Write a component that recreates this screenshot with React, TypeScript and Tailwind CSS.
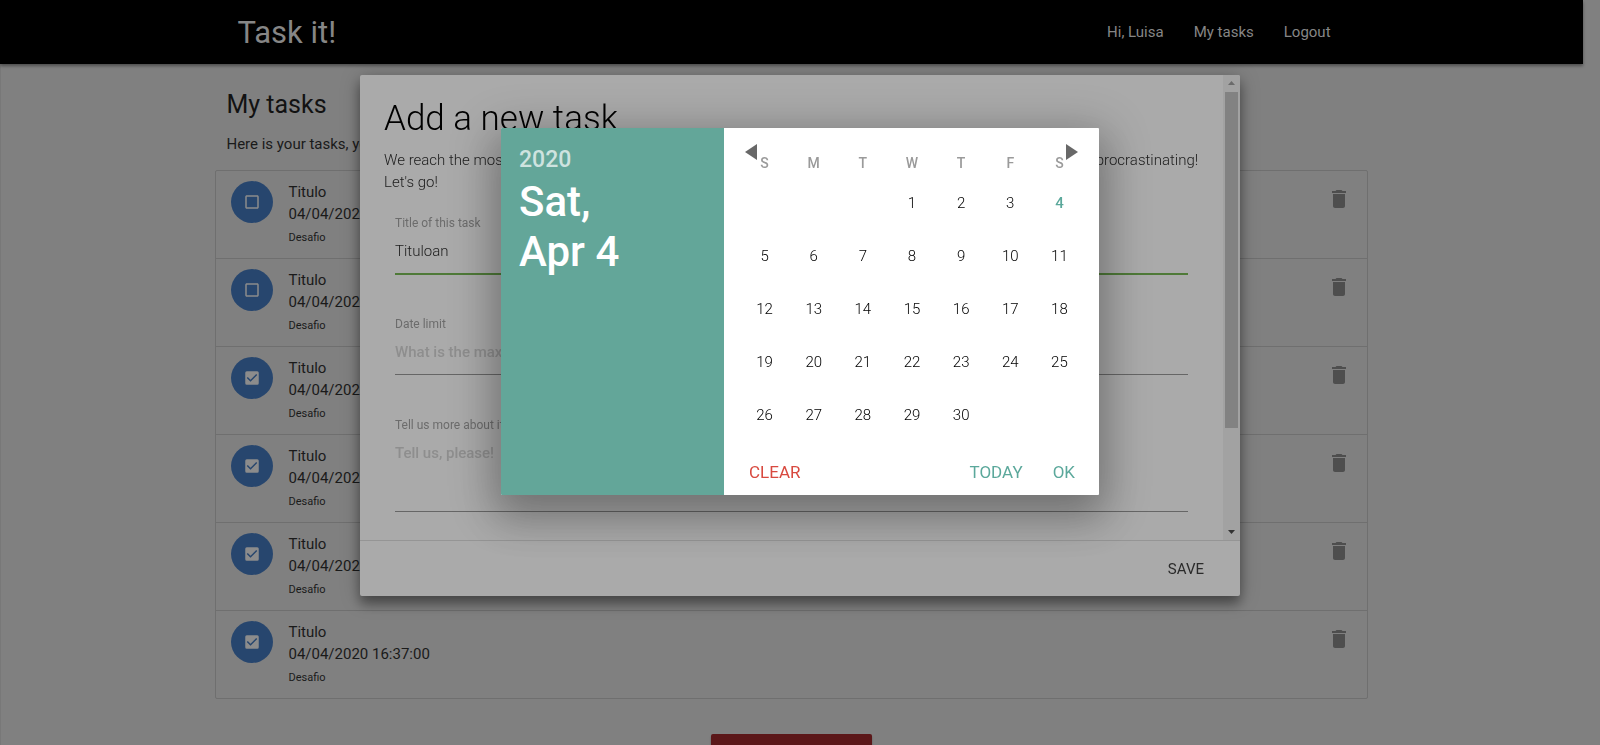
import React from "react";
import { MdCheckBox, MdCheckBoxOutlineBlank, MdDelete } from "react-icons/md";

const tasks = [false, false, true, true, true, true].map((done, id) => ({
  id,
  done,
  title: "Titulo",
  date: "04/04/2020 16:37:00",
  tag: "Desafio",
}));

const weekdays = ["S", "M", "T", "W", "T", "F", "S"];

const weeks: (number | null)[][] = [
  [null, null, null, 1, 2, 3, 4],
  [5, 6, 7, 8, 9, 10, 11],
  [12, 13, 14, 15, 16, 17, 18],
  [19, 20, 21, 22, 23, 24, 25],
  [26, 27, 28, 29, 30, null, null],
];

function NavBar() {
  return (
    <nav className="relative h-16 bg-black text-[#868686] shadow-[0_2px_3px_rgba(0,0,0,0.4)]">
      <div className="mx-auto flex h-full w-[70%] items-center justify-between">
        <a href="#home" className="text-[31px] leading-none">
          Task it!
        </a>
        <ul className="flex text-[15px] font-normal">
          {["Hi, Luisa", "My tasks", "Logout"].map((label) => (
            <li key={label}>
              <a href="#nav" className="block px-[15px] leading-[64px]">
                {label}
              </a>
            </li>
          ))}
        </ul>
      </div>
    </nav>
  );
}

function TaskList() {
  return (
    <ul className="mt-[15px] -mx-[11px] rounded-[2px] border border-[#6f6f6f]">
      {tasks.map((task) => (
        <li
          key={task.id}
          className="flex h-[88px] items-start gap-[15px] border-b border-[#6f6f6f] pt-[10px] pr-4 pl-[15px] last:h-[87px] last:border-b-0"
        >
          <button
            type="button"
            aria-label={task.done ? "Mark as pending" : "Mark as done"}
            className="flex size-[42px] shrink-0 items-center justify-center rounded-full bg-[#27466e] text-[18px] text-[#8c8c8c]"
          >
            {task.done ? <MdCheckBox /> : <MdCheckBoxOutlineBlank />}
          </button>
          <div className="grow text-[15px] leading-[22px] font-normal text-[#1a1a1a]">
            <p>{task.title}</p>
            <p>{task.date}</p>
            <p className="mt-[2px] text-[11px]">{task.tag}</p>
          </div>
          <button type="button" aria-label="Delete task" className="mt-[6px] text-[24px] text-[#4e4e4e]">
            <MdDelete />
          </button>
        </li>
      ))}
    </ul>
  );
}

function ScrollBar() {
  return (
    <div aria-hidden="true" className="flex w-[17px] shrink-0 flex-col items-center bg-[#a2a2a2]">
      <div className="flex h-[17px] items-center">
        <svg width="7" height="4" viewBox="0 0 7 4">
          <path d="M0 4h7L3.5 0z" fill="#6b6b6b" />
        </svg>
      </div>
      <div className="flex w-[13px] grow flex-col">
        <div className="h-[78%] bg-[#828282]" />
      </div>
      <div className="flex h-[17px] items-center">
        <svg width="7" height="4" viewBox="0 0 7 4">
          <path d="M0 0h7L3.5 4z" fill="#333" />
        </svg>
      </div>
    </div>
  );
}

function TaskModal() {
  return (
    <div
      role="dialog"
      aria-label="Add a new task"
      className="fixed inset-x-0 top-[10%] mx-auto flex h-[70%] w-[55%] flex-col overflow-hidden rounded-[2px] bg-[#aaaaaa] text-[#1c1c1c] shadow-[0_8px_12px_rgba(0,0,0,0.35),0_3px_20px_rgba(0,0,0,0.25)]"
    >
      <div className="flex min-h-0 grow">
        <div className="grow overflow-hidden p-6">
          <h2 className="text-[35px] leading-10 text-black">Add a new task</h2>
          <p className="mt-[10px] text-[15px] leading-[22px]">
            We reach the most important part of all: create here the tasks that you need to finish properly today and
            stop procrastinating! Let&apos;s go!
          </p>
          <form className="px-[11px] pt-[22px]">
            <div className="h-[101px]">
              <label htmlFor="title" className="block text-[12px] leading-4 font-normal text-[#6c6c6c]">
                Title of this task
              </label>
              <input
                id="title"
                type="text"
                defaultValue="Tituloan"
                className="block h-11 w-full border-b-2 border-[#4f7a38] bg-transparent pb-[2px] text-[15px] outline-none"
              />
            </div>
            <div className="h-[101px]">
              <label htmlFor="date" className="block text-[12px] leading-4 font-normal text-[#6c6c6c]">
                Date limit
              </label>
              <input
                id="date"
                type="text"
                placeholder="What is the maximum date?"
                className="block h-[43px] w-full border-b border-[#666666] bg-transparent pb-[2px] text-[15px] outline-none placeholder:font-medium placeholder:text-[#8e8e8e]"
              />
            </div>
            <div>
              <label htmlFor="details" className="block text-[12px] leading-4 font-normal text-[#6c6c6c]">
                Tell us more about it
              </label>
              <textarea
                id="details"
                placeholder="Tell us, please!"
                className="block h-[79px] w-full resize-none border-b border-[#666666] bg-transparent pt-[9px] text-[15px] leading-[22px] outline-none placeholder:font-medium placeholder:text-[#8e8e8e]"
              />
            </div>
          </form>
        </div>
        <ScrollBar />
      </div>
      <div className="flex h-[56px] shrink-0 items-center justify-end border-t border-[#959595] px-5 pt-[2px]">
        <button type="button" className="h-9 px-4 text-[15px] font-normal text-[#2b2b2b]">
          SAVE
        </button>
      </div>
    </div>
  );
}

function DatePicker() {
  return (
    <div
      role="dialog"
      aria-label="Date limit"
      className="fixed inset-x-0 top-32 mx-auto flex w-[598px] overflow-hidden rounded-[1px] bg-white shadow-[0_24px_38px_3px_rgba(0,0,0,0.14),0_9px_46px_8px_rgba(0,0,0,0.24)]"
    >
      <div className="w-[223px] shrink-0 bg-[#63a699] px-[18px] pt-[19px] font-medium text-white">
        <div className="text-[23px] leading-[25px] text-white/70">2020</div>
        <div className="mt-[5px] text-[42px] leading-[50px]">
          Sat,
          <br />
          Apr 4
        </div>
      </div>
      <div className="grow pt-4 pr-[15px] pl-4">
        <div className="flex h-4 justify-between pr-[6px] pl-[5px]">
          <button type="button" aria-label="Previous month">
            <svg width="12" height="16" viewBox="0 0 12 16">
              <path d="M12 0v16L0 8z" fill="#686868" />
            </svg>
          </button>
          <button type="button" aria-label="Next month">
            <svg width="12" height="16" viewBox="0 0 12 16">
              <path d="M0 0v16l12-8z" fill="#686868" />
            </svg>
          </button>
        </div>
        <table className="-mt-2 w-full table-fixed text-center text-[15px] text-black">
          <thead>
            <tr className="text-[14px] text-[#9a9a9a]">
              {weekdays.map((day, i) => (
                <th key={i} scope="col" className="h-[25px] p-0 pb-[2px] font-medium">
                  {day}
                </th>
              ))}
            </tr>
          </thead>
          <tbody>
            {weeks.map((week, w) => (
              <tr key={w}>
                {week.map((day, d) => (
                  <td key={d} className="h-[53px] p-0 align-middle">
                    {day && (
                      <button type="button" className={day === 4 ? "font-medium text-[#5ba89b]" : ""}>
                        {day}
                      </button>
                    )}
                  </td>
                ))}
              </tr>
            ))}
          </tbody>
        </table>
        <div className="flex h-[53px] items-center justify-between px-[9px] pt-[7px] text-[17px] leading-5 font-normal text-[#5ba89b]">
          <button type="button" className="text-[#d8493f]">
            CLEAR
          </button>
          <div className="flex gap-[30px]">
            <button type="button">TODAY</button>
            <button type="button">OK</button>
          </div>
        </div>
      </div>
    </div>
  );
}

export default function App() {
  return (
    <div className="h-screen overflow-hidden bg-[#808080] pr-[17px] font-['Roboto',sans-serif] text-[#121212]">
      <NavBar />
      <main className="h-full shadow-[inset_1px_0_#787878]">
        <div className="mx-auto w-[70%]">
          <div className="-mx-[11px] pt-[26px] font-light">
            <h1 className="text-[25px] leading-[30px] font-normal">My tasks</h1>
            <p className="mt-[13px] text-[15px] leading-[22px] font-normal text-[#1a1a1a]">
              Here is your tasks, you can see, create and delete them.
            </p>
            <TaskList />
            <button
              type="button"
              className="mx-auto mt-[35px] block h-14 w-[161px] rounded-[2px] bg-[#5b1719] text-[14px] text-[#808080] shadow-[0_2px_2px_rgba(0,0,0,0.3)]"
            >
              ADD A NEW TASK
            </button>
          </div>
        </div>
      </main>
      <div className="font-light">
        <TaskModal />
        <DatePicker />
      </div>
    </div>
  );
}
